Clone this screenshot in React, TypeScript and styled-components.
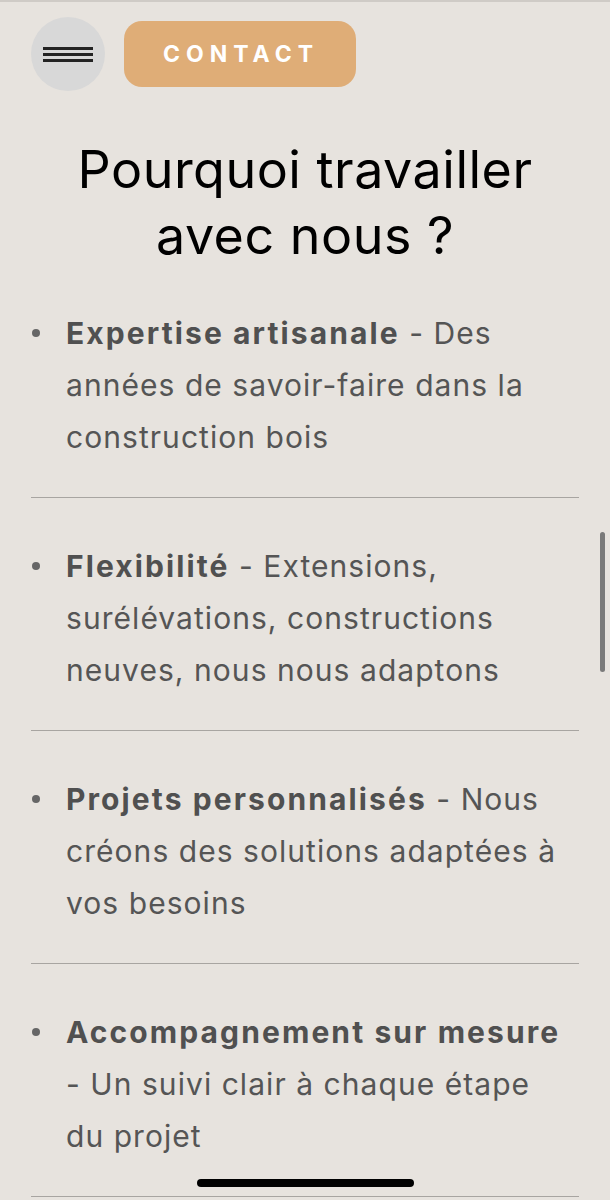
import styled, { createGlobalStyle } from 'styled-components';

const GlobalStyle = createGlobalStyle`
  html, body {
    margin: 0;
    padding: 0;
    background: #e7e3de;
  }
  body {
    font-family: Inter, "Liberation Sans", sans-serif;
    -webkit-font-smoothing: antialiased;
  }
`;

const Page = styled.div`
  min-height: 1200px;
  border-top: 2px solid #cfcbc6;
  box-sizing: border-box;
`;

const Header = styled.header`
  display: flex;
  align-items: center;
  gap: 19px;
  padding: 15px 31px 0;
`;

const MenuButton = styled.button`
  width: 74px;
  height: 74px;
  border-radius: 50%;
  border: none;
  background: #d8d8d8;
  display: flex;
  flex-direction: column;
  justify-content: center;
  align-items: center;
  gap: 3px;
  padding: 0;
`;

const MenuLine = styled.span`
  display: block;
  width: 50px;
  height: 3px;
  background: #232323;
`;

const ContactButton = styled.a`
  width: 232px;
  height: 66px;
  border-radius: 18px;
  background: #dfad77;
  color: #fff;
  display: flex;
  align-items: center;
  justify-content: center;
  padding-left: 2px;
  box-sizing: border-box;
  font-family: Inter, "Liberation Sans", sans-serif;
  font-weight: 700;
  font-size: 23px;
  letter-spacing: 6px;
  text-decoration: none;
`;

const Title = styled.h1`
  margin: 46px 0 0;
  text-align: center;
  font-family: Inter, "Liberation Sans", sans-serif;
  font-weight: 400;
  font-size: 52px;
  line-height: 66px;
  letter-spacing: 0.5px;
  color: #000;
`;

const List = styled.ul`
  list-style: none;
  margin: 38px 31px 0;
  padding: 0;
`;

const Item = styled.li`
  display: flex;
  padding: 0 0 34px;
  margin-bottom: 42px;
  border-bottom: 1px solid #a8a5a1;
  &:last-child {
    margin-bottom: 0;
  }
`;

const BulletCell = styled.span`
  flex: 0 0 35px;
  height: 52px;
  display: flex;
  align-items: center;
  padding-left: 1px;
  box-sizing: border-box;
`;

const Dot = styled.span`
  width: 8px;
  height: 8px;
  border-radius: 50%;
  background: #666;
`;

const ItemText = styled.p`
  margin: 0;
  flex: 1;
  padding-right: 12px;
  font-size: 30px;
  line-height: 52px;
  letter-spacing: 1.05px;
  color: #555;
  strong {
    font-weight: 700;
    letter-spacing: 2.1px;
    color: #505050;
  }
`;

const ScrollThumb = styled.div`
  position: fixed;
  left: 600px;
  top: 532px;
  width: 5px;
  height: 140px;
  border-radius: 3px;
  background: #7a7a7a;
`;

const HomeIndicator = styled.div`
  position: fixed;
  left: 197px;
  top: 1179px;
  width: 217px;
  height: 8px;
  border-radius: 4px;
  background: #000;
`;

const reasons = [
  { title: 'Expertise artisanale', text: 'Des années de savoir-faire dans la construction bois' },
  { title: 'Flexibilité', text: 'Extensions, surélévations, constructions neuves, nous nous adaptons' },
  { title: 'Projets personnalisés', text: 'Nous créons des solutions adaptées à vos besoins' },
  { title: 'Accompagnement sur mesure', text: 'Un suivi clair à chaque étape du projet' },
];

export default function App() {
  return (
    <Page>
      <GlobalStyle />
      <Header>
        <MenuButton aria-label="Menu">
          <MenuLine />
          <MenuLine />
          <MenuLine />
        </MenuButton>
        <ContactButton href="#contact">CONTACT</ContactButton>
      </Header>
      <Title>
        Pourquoi travailler
        <br />
        avec nous ?
      </Title>
      <List>
        {reasons.map((it) => (
          <Item key={it.title}>
            <BulletCell>
              <Dot />
            </BulletCell>
            <ItemText>
              <strong>{it.title}</strong> - {it.text}
            </ItemText>
          </Item>
        ))}
      </List>
      <ScrollThumb />
      <HomeIndicator />
    </Page>
  );
}
